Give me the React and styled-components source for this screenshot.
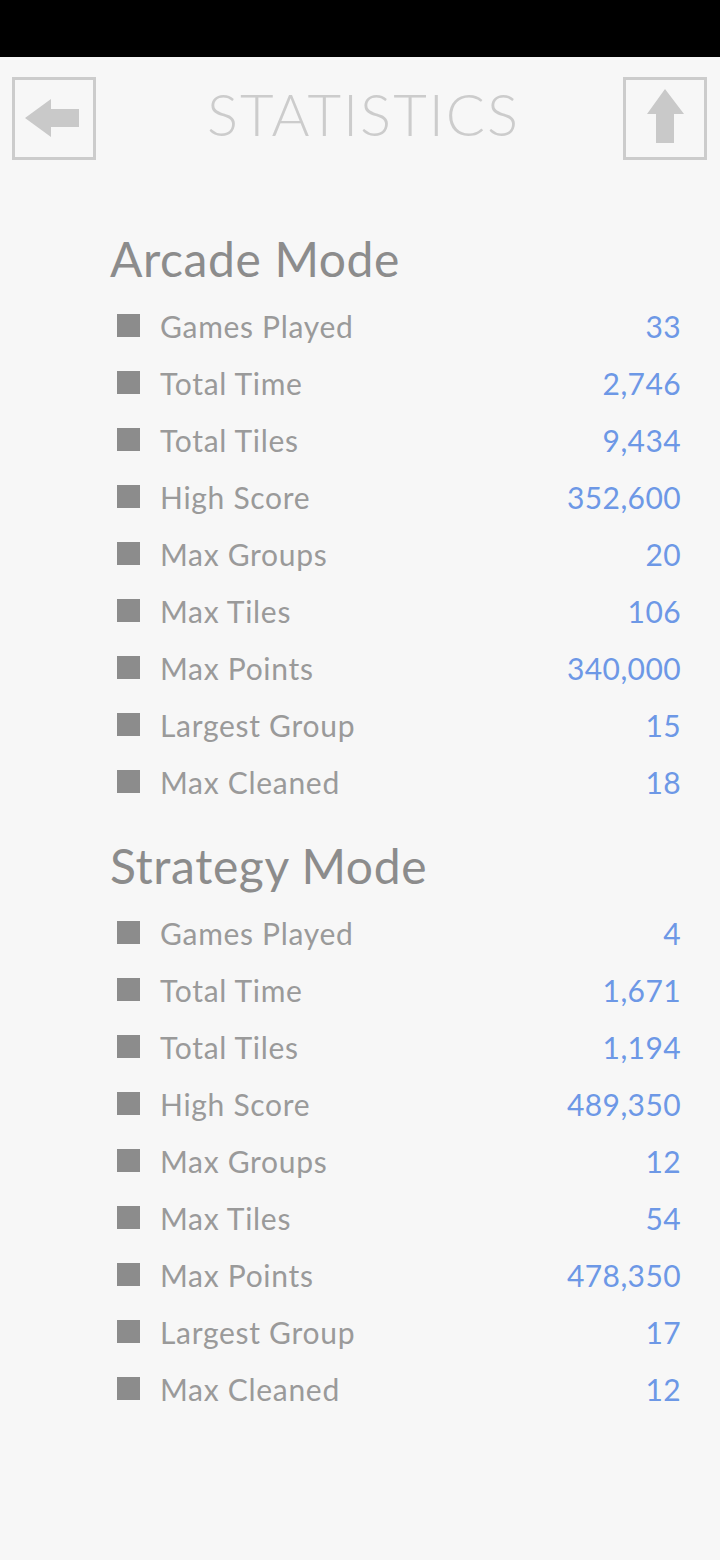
import React from 'react'
import styled, { createGlobalStyle } from 'styled-components'

const GlobalStyle = createGlobalStyle`
    html, body {
        margin: 0;
        padding: 0;
        background: #f7f7f7;
    }
    body {
        font-family: Lato, "Noto Sans", sans-serif;
    }
`;

const arcade = [
    ['Games Played', '33'],
    ['Total Time', '2,746'],
    ['Total Tiles', '9,434'],
    ['High Score', '352,600'],
    ['Max Groups', '20'],
    ['Max Tiles', '106'],
    ['Max Points', '340,000'],
    ['Largest Group', '15'],
    ['Max Cleaned', '18'],
]

const strategy = [
    ['Games Played', '4'],
    ['Total Time', '1,671'],
    ['Total Tiles', '1,194'],
    ['High Score', '489,350'],
    ['Max Groups', '12'],
    ['Max Tiles', '54'],
    ['Max Points', '478,350'],
    ['Largest Group', '17'],
    ['Max Cleaned', '12'],
]

const Section = ({title, rows}) => (
    <SectionStyled>
        <SectionTitle>{title}</SectionTitle>
        {rows.map(([label, value]) => (
            <Row key={label}>
                <Bullet />
                <Label>{label}</Label>
                <Value>{value}</Value>
            </Row>
        ))}
    </SectionStyled>
)

const App = () => {
    return (
        <Page>
            <GlobalStyle />
            <StatusBar />
            <Header>
                <IconButton aria-label="back">
                    <svg width="78" height="77" viewBox="0 0 78 77">
                        <polygon points="10,38 36,19 36,29 64,29 64,47 36,47 36,57" fill="#c9c9c9" />
                    </svg>
                </IconButton>
                <Title>STATISTICS</Title>
                <IconButton aria-label="share">
                    <svg width="78" height="77" viewBox="0 0 78 77">
                        <polygon points="39,9 58,34 48,34 48,63 30,63 30,34 21,34" fill="#c9c9c9" />
                    </svg>
                </IconButton>
            </Header>
            <Content>
                <Section title="Arcade Mode" rows={arcade} />
                <Section title="Strategy Mode" rows={strategy} />
            </Content>
        </Page>
    )
}

export default App

const Page = styled.div`
    width: 720px;
    min-height: 1560px;
    background: #f7f7f7;
`;

const StatusBar = styled.div`
    height: 57px;
    background: #000;
`;

const Header = styled.div`
    display: flex;
    align-items: center;
    justify-content: space-between;
    padding: 20px 13px 0 12px;
`;

const IconButton = styled.div`
    width: 78px;
    height: 77px;
    border: 3px solid #cccccc;
    display: flex;
    align-items: center;
    justify-content: center;
`;

const Title = styled.h1`
    margin: 0 0 10px;
    font-family: Lato, sans-serif;
    font-weight: 300;
    font-size: 58px;
    letter-spacing: 2px;
    color: #cccccc;
    padding-left: 8px;
`;

const Content = styled.div`
    padding: 67px 39px 0 110px;
`;

const SectionStyled = styled.section`
    margin-bottom: 24px;
`;

const SectionTitle = styled.h2`
    margin: 0 0 6px;
    font-weight: 400;
    font-size: 48px;
    line-height: 64px;
    letter-spacing: 0.6px;
    color: #8c8c8c;
`;

const Row = styled.div`
    display: flex;
    align-items: center;
    height: 57px;
    padding-left: 7px;
`;

const Bullet = styled.span`
    width: 23px;
    height: 23px;
    background: #8c8c8c;
    flex: none;
`;

const Label = styled.span`
    margin-left: 20px;
    flex: 1;
    font-size: 30px;
    letter-spacing: 0.7px;
    color: #9a9a9a;
`;

const Value = styled.span`
    font-size: 30px;
    letter-spacing: 0.4px;
    color: #6d98e6;
`;
